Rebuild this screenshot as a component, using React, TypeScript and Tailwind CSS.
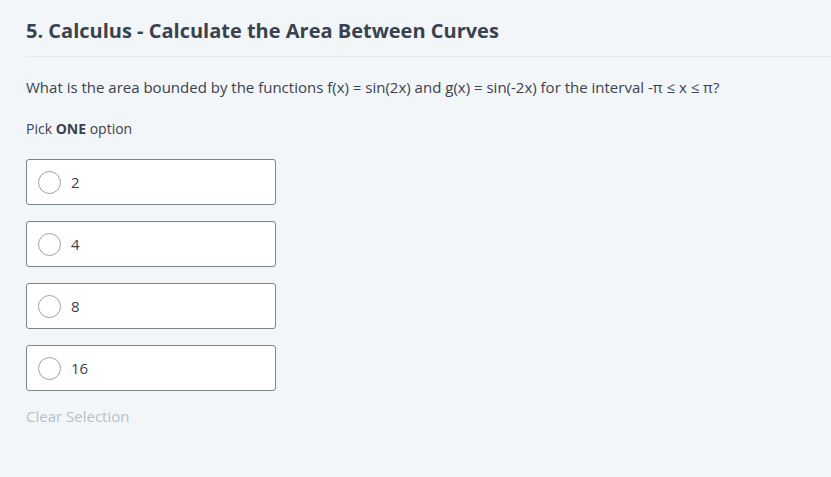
const OPTIONS = ['2', '4', '8', '16']

export default function App() {
  return (
    <div
      className="min-h-[477px] w-full bg-[#f3f6f8] pl-[26px] pt-[18px] text-[#39424e]"
      style={{ fontFamily: '"Open Sans", "Liberation Sans", sans-serif' }}
    >
      <h1 className="border-b border-[#e3e9ec] pb-[12px] text-[20px] font-bold leading-[26px]">
        5. Calculus - Calculate the Area Between Curves
      </h1>

      <p className="mt-[20px] text-[15px] leading-[21px] text-[#39424e]">
        What is the area bounded by the functions f(x) = sin(2x) and g(x) = sin(-2x) for the interval -π ≤ x ≤ π?
      </p>

      <p className="mt-[21px] text-[14px] leading-[20px]">
        Pick <b className="font-bold">ONE</b> option
      </p>

      <div className="mt-[20px] flex flex-col gap-[16px]">
        {OPTIONS.map((o) => (
          <label
            key={o}
            className="flex h-[46px] w-[250px] items-center gap-[10px] rounded-[3px] border border-[#7c8488] bg-white pl-[11px]"
          >
            <span className="h-[23px] w-[23px] rounded-full border border-[#9aa1a5] bg-white" />
            <span className="text-[15px] text-[#39424e]">{o}</span>
          </label>
        ))}
      </div>

      <p className="mt-[15px] text-[15px] leading-[21px] text-[#b8c0c6]">Clear Selection</p>
    </div>
  )
}
